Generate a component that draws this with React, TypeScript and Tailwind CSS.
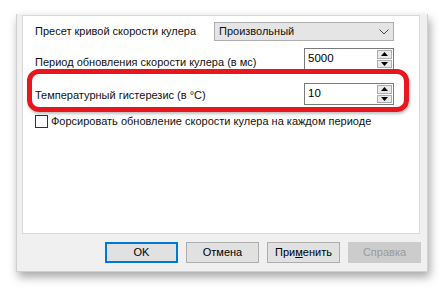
import React from "react";

const font = { fontFamily: '"Liberation Sans", Arial, sans-serif' };

function SpinBox({ value }: { value: string }) {
  return (
    <div className="flex h-[22px] w-[90px] flex-none items-stretch border border-[#7a7a7a] bg-white">
      <div className="flex flex-1 items-center pl-[3px] text-[11.5px] leading-none text-black">{value}</div>
      <div className="my-[1px] mr-[1px] flex w-[15px] flex-col gap-[1px]">
        <div className="flex flex-1 items-center justify-center border border-[#adadad] bg-[#e9e9e9]">
          <svg width="7" height="4" viewBox="0 0 7 4"><path d="M0 4 L3.5 0 L7 4 Z" fill="#000" /></svg>
        </div>
        <div className="flex flex-1 items-center justify-center border border-[#adadad] bg-[#e9e9e9]">
          <svg width="7" height="4" viewBox="0 0 7 4"><path d="M0 0 L3.5 4 L7 0 Z" fill="#000" /></svg>
        </div>
      </div>
    </div>
  );
}

function Btn({ children, primary, disabled }: { children: React.ReactNode; primary?: boolean; disabled?: boolean }) {
  const cls = primary
    ? "border-2 border-[#0078d7] bg-[#e1e1e1] text-black"
    : disabled
    ? "border border-[#cccccc] bg-[#cccccc] text-[#9a9a9a]"
    : "border border-[#adadad] bg-[#e1e1e1] text-black";
  return (
    <div className={`flex h-[21px] w-[73px] items-center justify-center text-[11px] leading-none ${cls}`}>{children}</div>
  );
}

export default function App() {
  return (
    <div className="h-[289px] w-[444px] overflow-hidden bg-white pl-[16px] pt-[14px]" style={font}>
      <div className="flex h-[258px] w-[412px] flex-col border-l border-b border-r border-[#d0d0d0] bg-[#f0f0f0] shadow-[2px_5px_9px_rgba(0,0,0,0.35)]">
        <div className="relative ml-[5px] mr-[7px] mt-[1px] h-[219px] whitespace-nowrap border border-[#d9d9d9] bg-white pl-[12px] pr-[25px] text-[11px] leading-none text-[#111]">
          <div className="mt-[6px] flex h-[19px] items-center justify-between">
            <span>Пресет кривой скорости кулера</span>
            <div className="flex h-[19px] w-[180px] flex-none items-center justify-between border border-[#adadad] bg-[#e5e5e5] pl-[4px] pr-[4px]">
              <span>Произвольный</span>
              <svg width="10" height="6" viewBox="0 0 10 6"><path d="M0.5 0.5 L5 5 L9.5 0.5" fill="none" stroke="#444" strokeWidth="1" /></svg>
            </div>
          </div>
          <div className="mt-[7px] flex h-[22px] items-center justify-between">
            <span className="pt-[6px]">Период обновления скорости кулера (в мс)</span>
            <SpinBox value="5000" />
          </div>
          <div className="mt-[13px] flex h-[22px] items-center justify-between">
            <span className="pt-[2px]">Температурный гистерезис (в °C)</span>
            <SpinBox value="10" />
          </div>
          <div className="mt-[10px] flex items-center gap-[3px]">
            <div className="h-[13px] w-[13px] flex-none border border-[#333] bg-white" />
            <span>Форсировать обновление скорости кулера на каждом периоде</span>
          </div>
          <div className="absolute left-[4px] top-[53px] h-[43px] w-[382px] rounded-[12px] border-[5px] border-[#e8161d] shadow-[1px_2px_3px_rgba(0,0,0,0.25)]" />
        </div>
        <div className="mr-[6px] mt-[8px] flex justify-end gap-[8px]">
          <Btn primary>OK</Btn>
          <Btn>Отмена</Btn>
          <Btn>
            <span>
              При<span className="underline">м</span>енить
            </span>
          </Btn>
          <Btn disabled>Справка</Btn>
        </div>
      </div>
    </div>
  );
}
